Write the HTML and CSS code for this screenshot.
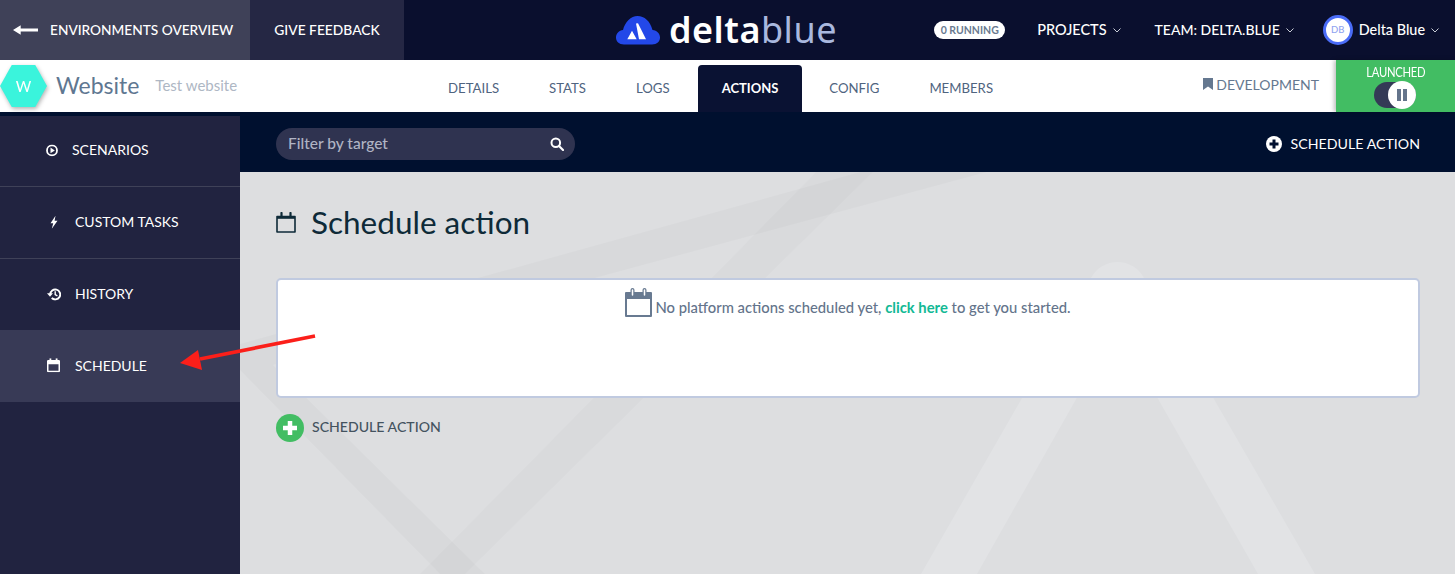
FILE: index.html
```html
<!DOCTYPE html>
<html lang="en">
<head>
<meta charset="utf-8">
<title>Schedule action</title>
<link rel="stylesheet" href="styles.css">
</head>
<body>
<header class="topbar">
  <a class="top-back"><svg class="back-arrow" viewBox="0 0 26 10"><path d="M0 5 8 0v3.400h18v3.200H8V10z"/></svg>ENVIRONMENTS OVERVIEW</a>
  <a class="top-feedback">GIVE FEEDBACK</a>
  <div class="logo">
    <svg class="logo-cloud" viewBox="0 0 44 29"><path fill="#2348e8" d="M8 28.500C3 28.500 0 25.500 0 21.500c0-4 3-7 7-7.500C9 6 15 0 21.500 0c7 0 12.500 5 15 14 4.500.5 7.500 3.500 7.500 7.500 0 4-3 7-8 7z"/><path fill="#fff" d="M20 7.500l2-.3 8 16.100h-7zM16 14.700l4.700 8.600h-9.400z"/></svg>
    <span class="logo-text"><b>delta</b><i>blue</i></span>
  </div>
  <div class="top-right">
    <span class="running">0 RUNNING</span>
    <a class="top-link top-projects">PROJECTS<svg class="caret" viewBox="0 0 8 5"><path d="M.5.500 4 4 7.500.500"/></svg></a>
    <a class="top-link top-team">TEAM: DELTA.BLUE<svg class="caret" viewBox="0 0 8 5"><path d="M.5.500 4 4 7.500.500"/></svg></a>
    <span class="avatar">DB</span>
    <a class="top-link top-user">Delta Blue<svg class="caret" viewBox="0 0 8 5"><path d="M.5.500 4 4 7.500.500"/></svg></a>
  </div>
</header>

<div class="subbar">
  <div class="hex"><span class="hex-shape">W</span></div>
  <div class="site"><span class="site-name">Website</span><span class="site-desc">Test website</span></div>
  <nav class="tabs">
    <a class="tab">DETAILS</a><a class="tab">STATS</a><a class="tab tab-logs">LOGS</a><a class="tab tab-active">ACTIONS</a><a class="tab tab-config">CONFIG</a><a class="tab">MEMBERS</a>
  </nav>
  <div class="env"><svg class="env-icon" viewBox="0 0 10 12"><path d="M0 0h10v12L5 8.500 0 12z"/></svg>DEVELOPMENT</div>
  <div class="launched">
    <span class="launched-label">LAUNCHED</span>
    <span class="toggle"><span class="knob"><i></i><i></i></span></span>
  </div>
</div>

<div class="body">
  <aside class="sidebar">
    <a class="side-item side-first">
      <svg class="side-icon icon-play" viewBox="0 0 12 12"><circle cx="6" cy="6" r="5" fill="none" stroke="#fff" stroke-width="1.800"/><path d="M4.500 3.200 8.800 6 4.500 8.800z" fill="#fff"/></svg>SCENARIOS</a>
    <a class="side-item">
      <svg class="side-icon icon-bolt" viewBox="0 0 8 13"><path d="M5.500 0 .5 7.300h2.700L1.800 13 7.500 5H4.600z" fill="#fff"/></svg>CUSTOM TASKS</a>
    <a class="side-item">
      <svg class="side-icon icon-history" viewBox="0 0 14 13"><path d="M3.200 6.500a5 5 0 1 1 1.500 3.700" fill="none" stroke="#fff" stroke-width="1.900"/><path d="M0 5.500h6L3 9z" fill="#fff"/><path d="M8.200 3.500v3.200l2.200 1.300" fill="none" stroke="#fff" stroke-width="1.400"/></svg>HISTORY</a>
    <a class="side-item side-active">
      <svg class="side-icon icon-cal" viewBox="0 0 13 14"><path fill-rule="evenodd" fill="#fff" d="M2.500 0h1.800v1.600h4.400V0h1.800v1.600h1.300q1.200 0 1.200 1.200v10q0 1.200-1.200 1.200H1.200Q0 14 0 12.800v-10q0-1.200 1.200-1.200h1.300zM1.500 6v6.500h10V6z"/></svg>SCHEDULE</a>
  </aside>
  <main class="main">
    <div class="toolbar">
      <div class="filter"><span>Filter by target</span>
        <svg class="search" viewBox="0 0 14 14"><circle cx="5.800" cy="5.800" r="4.300" fill="none" stroke="#fff" stroke-width="2"/><path d="m9 9 4 4" stroke="#fff" stroke-width="2.200" stroke-linecap="round"/></svg>
      </div>
      <a class="tool-action"><svg class="plus-small" viewBox="0 0 16 16"><circle cx="8" cy="8" r="8" fill="#fff"/><path d="M8 3.500v9M3.500 8h9" stroke="#00102f" stroke-width="3"/></svg>SCHEDULE ACTION</a>
    </div>
    <section class="content">
      <svg class="watermark" viewBox="0 0 1215 402" preserveAspectRatio="none">
        <path class="band" d="M620 0H747L33 193 245 402H200L0 198V172z"/>
        <path class="band band-faint" d="M576 0h57L225 402h-45z"/>
        <path fill="#e2e3e5" d="M681 402 851 106a30 30 0 0 1 53 0L1075 402h-57L877 155 737 402z"/>
      </svg>
      <h1 class="title"><svg class="title-icon" viewBox="0 0 20 21"><path d="M1 4.500h18V20H1z" fill="none" stroke="#0e2a38" stroke-width="1.600" stroke-linejoin="round"/><path d="M1 4h18v2.800H1z" fill="#0e2a38"/><path d="M5.500 1v4M14.500 1v4" stroke="#0e2a38" stroke-width="2.200" stroke-linecap="round"/></svg>Schedule action</h1>
      <div class="panel">
        <p class="empty"><svg class="empty-icon" viewBox="0 0 27 29"><path d="M1 5h25v23H1z" fill="none" stroke="#687a91" stroke-width="2" stroke-linejoin="round"/><path d="M1 4h25v7H1z" fill="#687a91"/><path d="M7.500 2v5.500M19.500 2v5.500" stroke="#687a91" stroke-width="4" stroke-linecap="round"/><path d="M7.500 2v5M19.500 2v5" stroke="#fff" stroke-width="1.500" stroke-linecap="round"/></svg><span class="empty-text">No platform actions scheduled yet, <a class="link">click here</a> to get you started.</span></p>
      </div>
      <a class="add"><svg class="add-icon" viewBox="0 0 28 28"><circle cx="14" cy="14" r="14" fill="#42bd63"/><path d="M14 7v14M7 14h14" stroke="#fff" stroke-width="4.500"/></svg><span class="add-text">SCHEDULE ACTION</span></a>
    </section>
  </main>
</div>

<svg class="arrow" viewBox="0 0 140 40"><path d="M135 4 20 27" stroke="#fb1f1a" stroke-width="3.600" fill="none"/><path d="M0 31 18 18l4 20z" fill="#fb1f1a"/></svg>
</body>
</html>
```
FILE: styles.css
```css
* { box-sizing: border-box; }
html, body { margin: 0; height: 100%; }
body {
  position: relative;
  width: 1455px;
  height: 574px;
  overflow: hidden;
  background: #00102f;
  font-family: "Lato", "Open Sans", sans-serif;
  font-size: 14px;
  color: #fff;
}
a { color: inherit; text-decoration: none; }

.topbar { display: flex; align-items: stretch; height: 60px; background: #0a0f2e; font-weight: 500; }
.top-back { display: flex; align-items: center; width: 250px; padding: 0 0 2px 13px; background: #3f4158; font-size: 13.700px; }
.back-arrow { width: 25px; height: 10px; margin: 2px 12px 0 0; fill: #fff; }
.top-feedback { display: flex; align-items: center; justify-content: center; width: 154px; padding-bottom: 2px; background: #252744; font-size: 13.800px; }
.logo { display: flex; align-items: center; margin-left: 212px; }
.logo-cloud { width: 44px; height: 29px; margin-top: 1px; }
.logo-text { margin-left: 9px; font-family: "Noto Sans", sans-serif; font-size: 36px; line-height: 60px; letter-spacing: .5px; }
.logo-text b { font-weight: 600; color: #fff; }
.logo-text i { font-style: normal; font-weight: 400; color: #a9b8de; }
.top-right { display: flex; align-items: center; margin-left: auto; padding: 0 16px 1px 0; }
.running { display: block; width: 71px; height: 18px; border-radius: 9px; background: #fff; color: #6a7a90; font-size: 10.500px; line-height: 18px; text-align: center; font-weight: 700; }
.top-link { display: flex; align-items: center; font-size: 14px; white-space: nowrap; }
.top-projects { margin-left: 32px; font-size: 14.500px; }
.top-team { margin-left: 34px; }
.top-user { margin-left: 6px; font-size: 14.400px; }
.caret { width: 8px; height: 5px; margin-left: 6px; margin-top: 2px; fill: none; stroke: #c8ccd6; stroke-width: 1; }
.avatar { display: block; width: 30px; height: 30px; margin-left: 29px; border: 3px solid #4a6cf7; border-radius: 50%; background: #fff; color: #8fa3f0; font-size: 9.500px; line-height: 24px; text-align: center; }

.subbar { display: flex; align-items: stretch; height: 52px; background: #fff; }
.hex { flex: none; width: 47px; height: 42px; margin-top: 5px; filter: drop-shadow(1px 2px 2px rgba(0,0,0,.3)); }
.hex-shape { display: flex; align-items: center; justify-content: center; width: 100%; height: 100%; background: #3af4dc; clip-path: polygon(25% 0, 75% 0, 100% 50%, 75% 100%, 25% 100%, 0 50%); font-size: 15px; color: #fff; }
.site { flex: none; display: flex; align-items: center; width: 376px; padding: 0 0 2px 9px; }
.site-name { font-size: 23px; color: #5f7791; }
.site-desc { margin-left: 16px; font-size: 15px; color: #aeb7c4; }
.tabs { flex: none; display: flex; align-items: stretch; margin-top: 5px; }
.tab { display: flex; align-items: center; padding: 0 25px 2px; font-size: 13.200px; color: #4f6480; }
.tab-logs { padding-right: 28px; }
.tab-config { padding-left: 27px; padding-right: 25px; }
.tab-active { padding: 0 24px 2px; border-radius: 4px 4px 0 0; background: #0a1233; color: #fff; font-size: 13px; font-weight: 700; }
.env { display: flex; align-items: center; margin: 0 17px 0 auto; height: 48px; font-size: 14px; color: #657890; white-space: nowrap; }
.env-icon { width: 10px; height: 12px; margin-right: 3px; fill: #657890; }
.launched { position: relative; flex: none; display: flex; flex-direction: column; align-items: center; width: 119px; background: #42bd63; box-shadow: -2px 0 4px rgba(0,0,0,.25); }
.launched-label { margin-top: 6px; font-size: 12.500px; line-height: 14px; letter-spacing: -.3px; transform: scaleX(.9); }
.toggle { display: block; position: relative; width: 42px; height: 26px; margin: 2px 0 0 -1px; border-radius: 13px; background: #343a56; }
.knob { position: absolute; right: 0; top: -1px; display: flex; gap: 2px; align-items: center; justify-content: center; width: 28px; height: 28px; border-radius: 50%; background: #fff; }
.knob i { display: block; width: 4px; height: 12px; background: #64748b; }

.body { display: flex; height: 462px; }
.sidebar { width: 240px; margin-top: 4px; background: #212340; }
.side-item { position: relative; display: flex; align-items: center; height: 72px; padding: 0 0 2px 75px; border-bottom: 1px solid #3f4158; font-size: 14px; }
.side-first { height: 71px; padding: 0 0 3px 72px; }
.side-active { height: 72px; margin-top: -1px; background: #383a56; border-bottom: 0; }
.side-icon { position: absolute; top: 50%; left: 46px; transform: translateY(-55%); }
.icon-play { width: 12px; height: 12px; }
.icon-bolt { left: 50px; width: 8px; height: 13px; }
.icon-history { left: 47px; width: 14px; height: 13px; }
.icon-cal { left: 47px; width: 13px; height: 14px; }
.main { flex: 1; display: flex; flex-direction: column; min-width: 0; }
.toolbar { display: flex; align-items: center; justify-content: space-between; height: 60px; padding: 3px 35px 0 36px; background: #00102f; }
.filter { display: flex; align-items: center; justify-content: space-between; width: 299px; height: 32px; padding: 0 11px 0 12px; border-radius: 16px; background: #2f3350; color: #b0b4c4; font-size: 15.500px; font-weight: 500; }
.filter span { margin-bottom: 1px; }
.search { width: 14px; height: 14px; }
.tool-action { display: flex; align-items: center; font-size: 14.200px; }
.plus-small { width: 16px; height: 16px; margin-right: 9px; }
.content { position: relative; flex: 1; padding: 0 35px 0 36px; background: #dddee0; overflow: hidden; }
.watermark { position: absolute; left: 0; top: 0; width: 100%; height: 100%; }
.band { fill: #000; fill-opacity: .02; }
.band-faint { fill-opacity: .014; }
.title { position: relative; display: flex; align-items: center; height: 106px; margin: 0; padding-bottom: 6px; font-size: 31.500px; font-weight: 400; color: #0e2a38; }
.title-icon { width: 20px; height: 21px; margin-right: 15px; }
.panel { position: relative; height: 120px; border: 2px solid #c0cae0; border-radius: 5px; background: #fff; }
.empty { display: flex; align-items: flex-end; justify-content: center; height: 28px; margin: 9px 0 0; color: #64748b; font-size: 14.800px; font-weight: 500; white-space: nowrap; }
.empty-icon { width: 27px; height: 29px; margin-right: 3px; }
.empty-text { margin-bottom: 1px; }
.link { color: #13b995; font-weight: 700; }
.add { position: relative; display: flex; align-items: center; margin-top: 16px; color: #44535f; font-size: 14.100px; font-weight: 500; }
.add-icon { width: 28px; height: 28px; margin-right: 8px; }
.add-text { margin-bottom: 3px; }

.arrow { position: absolute; left: 180px; top: 332px; width: 140px; height: 40px; }
```
